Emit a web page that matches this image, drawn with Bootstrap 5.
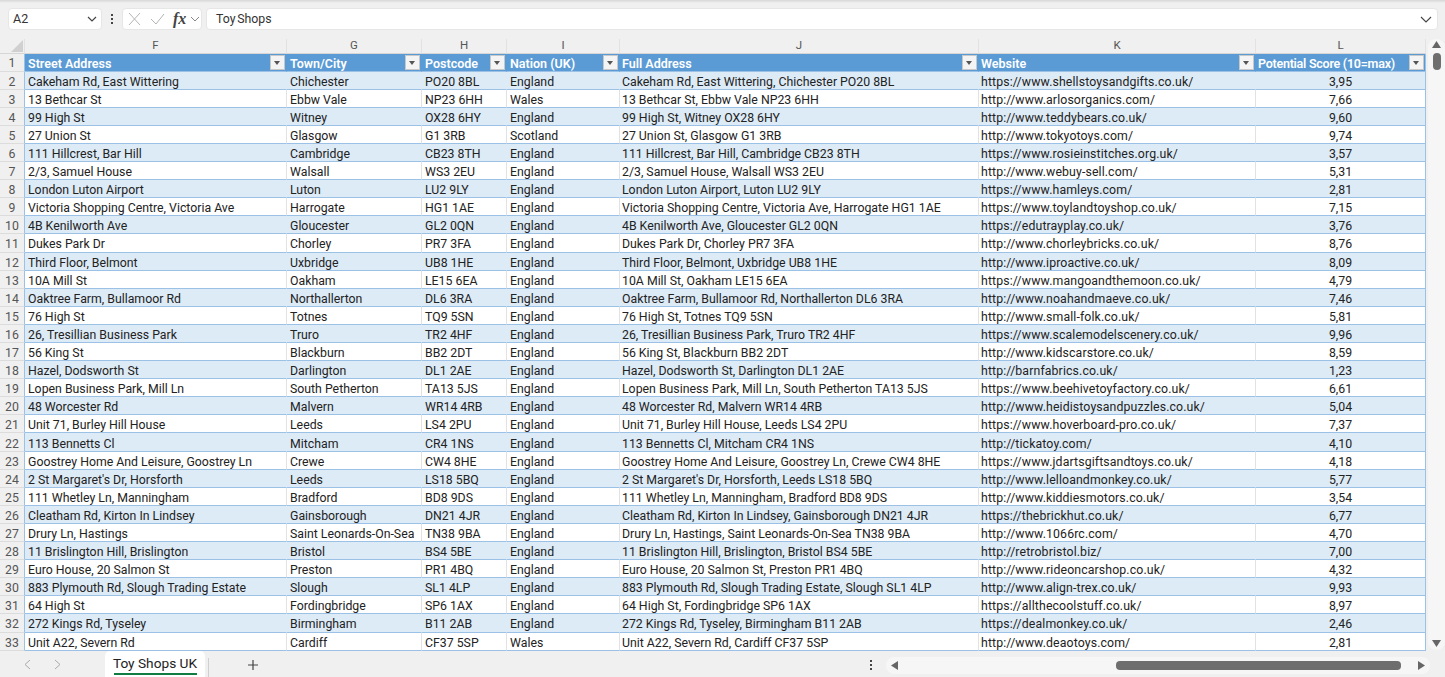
<!DOCTYPE html>
<html lang="en"><head><meta charset="utf-8"><title>Toy Shops UK</title>
<link href="https://cdn.jsdelivr.net/npm/bootstrap@5.3.0/dist/css/bootstrap.min.css" rel="stylesheet">
<style>
html,body{height:100%;overflow:hidden}
body{background:#f0f0f0;font-family:Roboto,"Liberation Sans",sans-serif;color:#222;width:1445px;height:677px}
.topline{height:3px;background:linear-gradient(#d6d6d6,#f0f0f0)}
.fbar{height:22px;margin:5px 7px 0 8px}
.fbox{background:#fff;border:1px solid #e6e6e6;border-radius:4px;height:22px;font-size:12.5px;color:#333}
.namebox{width:94px;padding:0 4px 0 4px}
.vdots{width:2px;margin:0 9px 0 9px}
.fxbox{width:80px;padding:0 1px 0 5px}
.inbox{flex:1;padding:0 5px 0 9px;margin-left:4px;word-spacing:-1.4px;font-size:12.3px}
.fxt{font-family:"Liberation Serif",serif;font-style:italic;font-weight:700;font-size:16px;color:#444;line-height:1;margin-left:8px}
.xmark{flex:none}
.chk{flex:none;margin-left:9px}
.sheet-wrap{height:612px;margin-top:9px;overflow:hidden}
.sheet{table-layout:fixed;border-collapse:separate;border-spacing:0;width:1426px;font-size:12.3px;line-height:14px;margin:0}
.sheet td,.sheet th{height:18.08px;padding:3px 0 0 3px;white-space:nowrap;overflow:hidden;font-weight:400;border-bottom:1px solid #9bc2e6;box-sizing:border-box;position:relative;color:#222}
.sheet td:nth-child(6),.sheet td:nth-child(7){padding-left:2px}
.sheet tbody tr:not(.hdr) td:nth-child(7){letter-spacing:.12px}
.sheet thead th{height:14.5px;line-height:13px;padding:0;background:#f0f0f0;color:#555;text-align:center;border-bottom:1px solid #d6d6d6;border-right:1px solid #e2e2e2;font-size:11.5px}
.sheet tbody th{background:#f0f0f0;padding:3px 0 0;text-align:center;color:#555;border-bottom:1px solid #dcdcdc;border-right:1px solid #9bc2e6}
.sheet tbody tr:nth-child(even) td{background:#ddebf7;border-right:1px solid #ddebf7}
.sheet tbody tr:nth-child(odd) td{background:#fff;border-right:1px solid #e2e2e2}
.sheet tbody tr.hdr td{background:#5b9bd5;color:#fff;font-weight:600;border-right:1px solid #5b9bd5;font-size:12.5px;padding-top:2px;line-height:15px}
.sheet tbody tr.hdr th{padding-top:2px;line-height:15px}
.sheet td:last-child{text-align:center;padding:3px 0 0}
.sheet tr.hdr td:last-child{text-align:left;padding-left:2px;letter-spacing:-.25px}
.sheet tbody td:nth-child(8){border-right:1px solid #9bc2e6!important}
.corner{display:block;width:0;height:0;border-left:12px solid transparent;border-bottom:12px solid #d0d0d0;margin:1px 0 0 11px}
.fbtn{position:absolute;right:1px;top:1px;width:15px;height:15px;background:#f4f4f4;border:1px solid #c8c8c8}
.fbtn::after{content:"";position:absolute;left:3px;top:5px;border-left:3.5px solid transparent;border-right:3.5px solid transparent;border-top:4px solid #555}
.vscroll{width:17px;margin:0 0 1px 2px;padding:2px 0 3px;background:#f6f6f6;border-radius:8px}
.vthumb{width:8px;height:17px;background:#6e6e6e;border-radius:4px;margin:5px auto 0}
.bottom{height:26px}
.navs{width:105px;padding-left:24px;gap:23px}
.tabx{height:26px;width:100px;background:#fff;border-radius:5px 5px 0 0;font-size:13.7px;line-height:25px;text-align:center;color:#222;margin-right:3px;position:relative}
.tabx::after{content:"";position:absolute;left:9px;right:8px;bottom:2px;height:2px;background:#107c41}
.sepv{width:1px;height:19px;background:#cfcfcf;margin:6px 38px 0 0}
.plus{width:12px;margin-top:2px}
.hdots{width:2px;margin:2px 0 0 611px}
.hs{width:544px;height:17px;margin:2px 0 0 14px;background:#f6f6f6;border-radius:8px;padding:0 5px 0 5px;position:relative}
.hthumb{position:absolute;left:230px;top:4px;width:285px;height:9px;background:#6e6e6e;border-radius:4px}
</style></head><body>
<div class="topline"></div>
<div class="fbar d-flex align-items-center">
<div class="fbox namebox d-flex align-items-center justify-content-between"><span>A2</span><svg width="10" height="6" viewBox="0 0 10 6"><path d="M1 1l4 4 4-4" fill="none" stroke="#444" stroke-width="1.2"/></svg></div>
<svg class="vdots" height="10" viewBox="0 0 2 10"><g fill="#444"><rect width="2" height="2"/><rect y="4" width="2" height="2"/><rect y="8" width="2" height="2"/></g></svg>
<div class="fbox fxbox d-flex align-items-center"><svg class="xmark" width="13" height="12" viewBox="0 0 13 12"><path d="M1 0l11 12M12 0L1 12" stroke="#b4b4b4" fill="none"/></svg><svg class="chk" width="15" height="12" viewBox="0 0 15 12"><path d="M1 6l5 5 8-10" stroke="#b4b4b4" fill="none"/></svg><span class="fxt">fx</span><svg class="ms-auto xmark" width="10" height="6" viewBox="0 0 10 6"><path d="M1 1l4 4 4-4" fill="none" stroke="#888"/></svg></div>
<div class="fbox inbox d-flex align-items-center justify-content-between"><span>Toy Shops</span><svg width="12" height="7" viewBox="0 0 12 7"><path d="M1 1l5 5 5-5" fill="none" stroke="#444" stroke-width="1.1"/></svg></div>
</div>
<div class="sheet-wrap d-flex">
<table class="sheet">
<colgroup><col style="width:25px"><col style="width:262px"><col style="width:135px"><col style="width:85px"><col style="width:113px"><col style="width:359px"><col style="width:277px"><col style="width:170px"></colgroup>
<thead><tr><th><span class="corner"></span></th><th>F</th><th>G</th><th>H</th><th>I</th><th>J</th><th>K</th><th>L</th></tr></thead>
<tbody>
<tr class="hdr"><th>1</th><td>Street Address<i class="fbtn"></i></td><td>Town/City<i class="fbtn"></i></td><td>Postcode<i class="fbtn"></i></td><td>Nation (UK)<i class="fbtn"></i></td><td>Full Address<i class="fbtn"></i></td><td>Website<i class="fbtn"></i></td><td>Potential Score (10=max)<i class="fbtn"></i></td></tr>
<tr><th>2</th><td>Cakeham Rd, East Wittering</td><td>Chichester</td><td>PO20 8BL</td><td>England</td><td>Cakeham Rd, East Wittering, Chichester PO20 8BL</td><td>https://www.shellstoysandgifts.co.uk/</td><td>3,95</td></tr>
<tr><th>3</th><td>13 Bethcar St</td><td>Ebbw Vale</td><td>NP23 6HH</td><td>Wales</td><td>13 Bethcar St, Ebbw Vale NP23 6HH</td><td>http://www.arlosorganics.com/</td><td>7,66</td></tr>
<tr><th>4</th><td>99 High St</td><td>Witney</td><td>OX28 6HY</td><td>England</td><td>99 High St, Witney OX28 6HY</td><td>http://www.teddybears.co.uk/</td><td>9,60</td></tr>
<tr><th>5</th><td>27 Union St</td><td>Glasgow</td><td>G1 3RB</td><td>Scotland</td><td>27 Union St, Glasgow G1 3RB</td><td>http://www.tokyotoys.com/</td><td>9,74</td></tr>
<tr><th>6</th><td>111 Hillcrest, Bar Hill</td><td>Cambridge</td><td>CB23 8TH</td><td>England</td><td>111 Hillcrest, Bar Hill, Cambridge CB23 8TH</td><td>https://www.rosieinstitches.org.uk/</td><td>3,57</td></tr>
<tr><th>7</th><td>2/3, Samuel House</td><td>Walsall</td><td>WS3 2EU</td><td>England</td><td>2/3, Samuel House, Walsall WS3 2EU</td><td>http://www.webuy-sell.com/</td><td>5,31</td></tr>
<tr><th>8</th><td>London Luton Airport</td><td>Luton</td><td>LU2 9LY</td><td>England</td><td>London Luton Airport, Luton LU2 9LY</td><td>https://www.hamleys.com/</td><td>2,81</td></tr>
<tr><th>9</th><td>Victoria Shopping Centre, Victoria Ave</td><td>Harrogate</td><td>HG1 1AE</td><td>England</td><td>Victoria Shopping Centre, Victoria Ave, Harrogate HG1 1AE</td><td>https://www.toylandtoyshop.co.uk/</td><td>7,15</td></tr>
<tr><th>10</th><td>4B Kenilworth Ave</td><td>Gloucester</td><td>GL2 0QN</td><td>England</td><td>4B Kenilworth Ave, Gloucester GL2 0QN</td><td>https://edutrayplay.co.uk/</td><td>3,76</td></tr>
<tr><th>11</th><td>Dukes Park Dr</td><td>Chorley</td><td>PR7 3FA</td><td>England</td><td>Dukes Park Dr, Chorley PR7 3FA</td><td>http://www.chorleybricks.co.uk/</td><td>8,76</td></tr>
<tr><th>12</th><td>Third Floor, Belmont</td><td>Uxbridge</td><td>UB8 1HE</td><td>England</td><td>Third Floor, Belmont, Uxbridge UB8 1HE</td><td>http://www.iproactive.co.uk/</td><td>8,09</td></tr>
<tr><th>13</th><td>10A Mill St</td><td>Oakham</td><td>LE15 6EA</td><td>England</td><td>10A Mill St, Oakham LE15 6EA</td><td>https://www.mangoandthemoon.co.uk/</td><td>4,79</td></tr>
<tr><th>14</th><td>Oaktree Farm, Bullamoor Rd</td><td>Northallerton</td><td>DL6 3RA</td><td>England</td><td>Oaktree Farm, Bullamoor Rd, Northallerton DL6 3RA</td><td>http://www.noahandmaeve.co.uk/</td><td>7,46</td></tr>
<tr><th>15</th><td>76 High St</td><td>Totnes</td><td>TQ9 5SN</td><td>England</td><td>76 High St, Totnes TQ9 5SN</td><td>http://www.small-folk.co.uk/</td><td>5,81</td></tr>
<tr><th>16</th><td>26, Tresillian Business Park</td><td>Truro</td><td>TR2 4HF</td><td>England</td><td>26, Tresillian Business Park, Truro TR2 4HF</td><td>https://www.scalemodelscenery.co.uk/</td><td>9,96</td></tr>
<tr><th>17</th><td>56 King St</td><td>Blackburn</td><td>BB2 2DT</td><td>England</td><td>56 King St, Blackburn BB2 2DT</td><td>http://www.kidscarstore.co.uk/</td><td>8,59</td></tr>
<tr><th>18</th><td>Hazel, Dodsworth St</td><td>Darlington</td><td>DL1 2AE</td><td>England</td><td>Hazel, Dodsworth St, Darlington DL1 2AE</td><td>http://barnfabrics.co.uk/</td><td>1,23</td></tr>
<tr><th>19</th><td>Lopen Business Park, Mill Ln</td><td>South Petherton</td><td>TA13 5JS</td><td>England</td><td>Lopen Business Park, Mill Ln, South Petherton TA13 5JS</td><td>https://www.beehivetoyfactory.co.uk/</td><td>6,61</td></tr>
<tr><th>20</th><td>48 Worcester Rd</td><td>Malvern</td><td>WR14 4RB</td><td>England</td><td>48 Worcester Rd, Malvern WR14 4RB</td><td>http://www.heidistoysandpuzzles.co.uk/</td><td>5,04</td></tr>
<tr><th>21</th><td>Unit 71, Burley Hill House</td><td>Leeds</td><td>LS4 2PU</td><td>England</td><td>Unit 71, Burley Hill House, Leeds LS4 2PU</td><td>https://www.hoverboard-pro.co.uk/</td><td>7,37</td></tr>
<tr><th>22</th><td>113 Bennetts Cl</td><td>Mitcham</td><td>CR4 1NS</td><td>England</td><td>113 Bennetts Cl, Mitcham CR4 1NS</td><td>http://tickatoy.com/</td><td>4,10</td></tr>
<tr><th>23</th><td>Goostrey Home And Leisure, Goostrey Ln</td><td>Crewe</td><td>CW4 8HE</td><td>England</td><td>Goostrey Home And Leisure, Goostrey Ln, Crewe CW4 8HE</td><td>https://www.jdartsgiftsandtoys.co.uk/</td><td>4,18</td></tr>
<tr><th>24</th><td>2 St Margaret's Dr, Horsforth</td><td>Leeds</td><td>LS18 5BQ</td><td>England</td><td>2 St Margaret's Dr, Horsforth, Leeds LS18 5BQ</td><td>http://www.lelloandmonkey.co.uk/</td><td>5,77</td></tr>
<tr><th>25</th><td>111 Whetley Ln, Manningham</td><td>Bradford</td><td>BD8 9DS</td><td>England</td><td>111 Whetley Ln, Manningham, Bradford BD8 9DS</td><td>http://www.kiddiesmotors.co.uk/</td><td>3,54</td></tr>
<tr><th>26</th><td>Cleatham Rd, Kirton In Lindsey</td><td>Gainsborough</td><td>DN21 4JR</td><td>England</td><td>Cleatham Rd, Kirton In Lindsey, Gainsborough DN21 4JR</td><td>https://thebrickhut.co.uk/</td><td>6,77</td></tr>
<tr><th>27</th><td>Drury Ln, Hastings</td><td>Saint Leonards-On-Sea</td><td>TN38 9BA</td><td>England</td><td>Drury Ln, Hastings, Saint Leonards-On-Sea TN38 9BA</td><td>http://www.1066rc.com/</td><td>4,70</td></tr>
<tr><th>28</th><td>11 Brislington Hill, Brislington</td><td>Bristol</td><td>BS4 5BE</td><td>England</td><td>11 Brislington Hill, Brislington, Bristol BS4 5BE</td><td>http://retrobristol.biz/</td><td>7,00</td></tr>
<tr><th>29</th><td>Euro House, 20 Salmon St</td><td>Preston</td><td>PR1 4BQ</td><td>England</td><td>Euro House, 20 Salmon St, Preston PR1 4BQ</td><td>http://www.rideoncarshop.co.uk/</td><td>4,32</td></tr>
<tr><th>30</th><td>883 Plymouth Rd, Slough Trading Estate</td><td>Slough</td><td>SL1 4LP</td><td>England</td><td>883 Plymouth Rd, Slough Trading Estate, Slough SL1 4LP</td><td>http://www.align-trex.co.uk/</td><td>9,93</td></tr>
<tr><th>31</th><td>64 High St</td><td>Fordingbridge</td><td>SP6 1AX</td><td>England</td><td>64 High St, Fordingbridge SP6 1AX</td><td>https://allthecoolstuff.co.uk/</td><td>8,97</td></tr>
<tr><th>32</th><td>272 Kings Rd, Tyseley</td><td>Birmingham</td><td>B11 2AB</td><td>England</td><td>272 Kings Rd, Tyseley, Birmingham B11 2AB</td><td>https://dealmonkey.co.uk/</td><td>2,46</td></tr>
<tr><th>33</th><td>Unit A22, Severn Rd</td><td>Cardiff</td><td>CF37 5SP</td><td>Wales</td><td>Unit A22, Severn Rd, Cardiff CF37 5SP</td><td>http://www.deaotoys.com/</td><td>2,81</td></tr>
</tbody></table>
<div class="vscroll d-flex flex-column align-items-center justify-content-between">
<div class="text-center lh-1"><svg class="d-block mx-auto" width="9" height="7" viewBox="0 0 9 7"><path d="M4.500 0L9 7H0z" fill="#666"/></svg><div class="vthumb"></div></div>
<svg width="9" height="7" viewBox="0 0 9 7"><path d="M0 0H9L4.500 7z" fill="#666"/></svg>
</div></div>
<div class="bottom d-flex align-items-center">
<div class="navs d-flex align-items-center"><svg width="7" height="11" viewBox="0 0 7 11"><path d="M6 1L1 5.500 6 10" fill="none" stroke="#aaa"/></svg><svg width="7" height="11" viewBox="0 0 7 11"><path d="M1 1l5 4.500L1 10" fill="none" stroke="#aaa"/></svg></div>
<div class="tabx">Toy Shops UK</div><div class="sepv"></div>
<svg class="plus" width="12" height="12" viewBox="0 0 12 12"><path d="M6 1v10M1 6h10" stroke="#444" stroke-width="1.2"/></svg>
<svg class="hdots" height="10" viewBox="0 0 2 10"><g fill="#444"><rect width="2" height="2"/><rect y="4" width="2" height="2"/><rect y="8" width="2" height="2"/></g></svg>
<div class="hs d-flex align-items-center justify-content-between"><svg width="7" height="9" viewBox="0 0 7 9"><path d="M7 0v9L0 4.500z" fill="#666"/></svg><div class="hthumb"></div><svg width="7" height="9" viewBox="0 0 7 9"><path d="M0 0v9l7-4.500z" fill="#666"/></svg></div>
</div>
</body></html>
